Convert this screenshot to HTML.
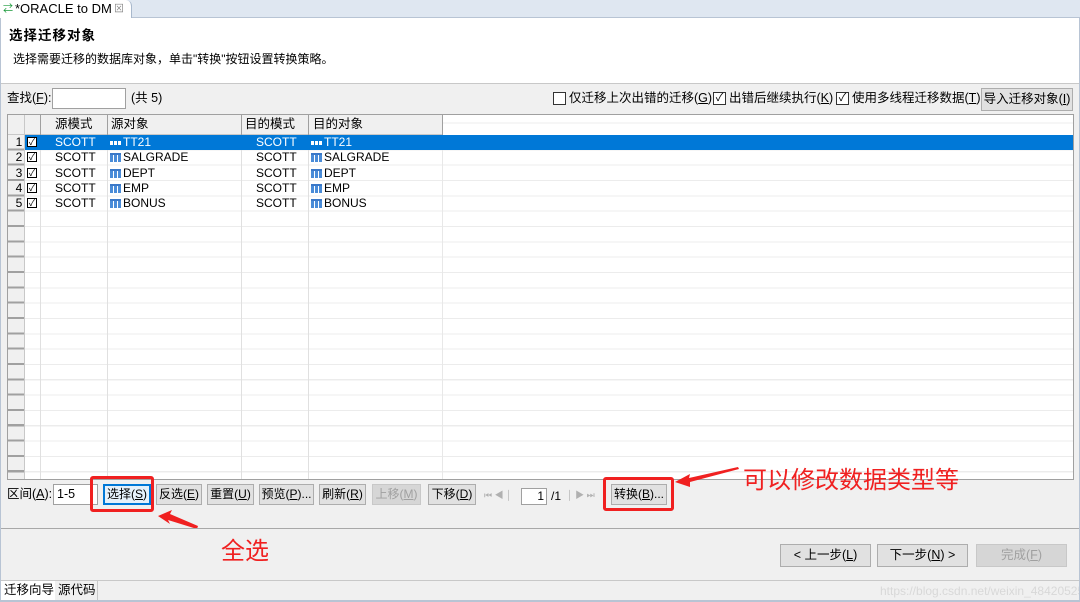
<!DOCTYPE html>
<html><head><meta charset="utf-8"><style>
*{margin:0;padding:0;box-sizing:border-box}
body{width:1080px;height:602px;position:relative;overflow:hidden;background:#f0f0f0;font-family:"Liberation Sans","Noto Sans CJK SC",sans-serif;font-size:12px;color:#000}
.a{position:absolute;white-space:nowrap;line-height:15px}
.btn{position:absolute;height:21px;border:1px solid #adadad;background:#e1e1e1;font-size:12px;line-height:19px;text-align:center}
.dis{color:#a0a0a0;background:#d6d6d6;border-color:#c8c8c8}
.cb{position:absolute;width:13px;height:13px;border:1px solid #333;background:#fff}
.row{position:absolute;left:40px;width:1033px;height:15px;font-size:12px;line-height:15px}
.row span{position:absolute}
.ti{display:inline-block;width:11px;height:9px;background:repeating-linear-gradient(90deg,#4a8cd8 0 3px,#fff 3px 4px);border-top:2px solid #3a78c8;vertical-align:-1px;margin-right:2px}
.sel .ti{background:repeating-linear-gradient(90deg,#fff 0 3px,#0078d7 3px 4px);border-top:2px solid #0078d7;height:6px;vertical-align:1px}
.ck{position:absolute;left:-13px;top:2px;width:10px;height:10px;border:1px solid #000;background:#fff;color:#000;font-size:9px;line-height:8px;text-align:center;font-style:normal}
.red{position:absolute;border:3px solid #f02020;border-radius:3px}
</style></head><body>
<div class="a" style="left:0;top:0;width:1080px;height:18px;background:#dfe7f1;border-bottom:1px solid #b8c4d4"></div>
<div class="a" style="left:0;top:0;width:132px;height:18px;background:#fff;border-right:1px solid #a8b8cc;border-radius:0 6px 0 0"></div>
<div class="a" style="left:3px;top:2px;font-size:10px;color:#1a9a3a">⇄</div>
<div class="a" style="left:15px;top:1px;font-size:13px;color:#000">*ORACLE to DM</div>
<div class="a" style="left:114px;top:2px;font-size:10px;color:#888">⊠</div>
<div class="a" style="left:1px;top:18px;width:1078px;height:66px;background:#fff;border-bottom:1px solid #c8c8c8"></div>
<div class="a" style="left:9px;top:27px;font-size:13.5px;font-weight:bold;letter-spacing:1px;line-height:17px">选择迁移对象</div>
<div class="a" style="left:13px;top:52px;font-size:12px">选择需要迁移的数据库对象，单击"转换"按钮设置转换策略。</div>
<div class="a" style="left:7px;top:91px;font-size:12.5px">查找(<u>F</u>):</div>
<div class="a" style="left:52px;top:88px;width:74px;height:21px;background:#fff;border:1px solid #a0a0a0"></div>
<div class="a" style="left:131px;top:91px;font-size:12.5px">(共 5)</div>
<div class="cb" style="left:553px;top:92px"></div>
<div class="a" style="left:569px;top:91px;font-size:12.5px">仅迁移上次出错的迁移(<u>G</u>)</div>
<div class="cb" style="left:713px;top:92px;font-size:11px;line-height:10px;text-align:center">✓</div>
<div class="a" style="left:729px;top:91px;font-size:12.5px">出错后继续执行(<u>K</u>)</div>
<div class="cb" style="left:836px;top:92px;font-size:11px;line-height:10px;text-align:center">✓</div>
<div class="a" style="left:852px;top:91px;font-size:12.5px">使用多线程迁移数据(<u>T</u>)</div>
<div class="btn" style="left:981px;top:88px;width:92px;height:23px;line-height:21px;font-size:12.5px">导入迁移对象(<u>I</u>)</div>
<div class="a" style="left:7px;top:114px;width:1067px;height:366px;background:#fff;border:1px solid #a0a0a0;
background-image:repeating-linear-gradient(180deg,transparent 0 14.3px,#ececec 14.3px 15.33px);background-position:0 20px;background-repeat:repeat-y"></div>
<div class="a" style="left:8px;top:115px;width:435px;height:20px;background:#f0f0f0;border-bottom:1px solid #c8c8c8"></div>
<div class="a" style="left:8px;top:135px;width:16px;height:344px;background:#f0f0f0;
background-image:repeating-linear-gradient(180deg,#f0f0f0 0 13.3px,#a0a0a0 13.3px 15.33px)"></div>
<div class="a" style="left:24px;top:115px;width:1px;height:364px;background:#c8c8c8"></div>
<div class="a" style="left:40px;top:115px;width:1px;height:364px;background:#e0e0e0"></div>
<div class="a" style="left:107px;top:115px;width:1px;height:364px;background:#e0e0e0"></div>
<div class="a" style="left:241px;top:115px;width:1px;height:364px;background:#e0e0e0"></div>
<div class="a" style="left:308px;top:115px;width:1px;height:364px;background:#e0e0e0"></div>
<div class="a" style="left:442px;top:115px;width:1px;height:364px;background:#e8e8e8"></div>
<div class="a" style="left:40px;top:115px;width:1px;height:20px;background:#a0a0a0"></div>
<div class="a" style="left:107px;top:115px;width:1px;height:20px;background:#a0a0a0"></div>
<div class="a" style="left:241px;top:115px;width:1px;height:20px;background:#a0a0a0"></div>
<div class="a" style="left:308px;top:115px;width:1px;height:20px;background:#a0a0a0"></div>
<div class="a" style="left:442px;top:115px;width:1px;height:20px;background:#a0a0a0"></div>
<div class="a" style="left:55px;top:117px;font-size:12.5px">源模式</div>
<div class="a" style="left:111px;top:117px;font-size:12.5px">源对象</div>
<div class="a" style="left:245px;top:117px;font-size:12.5px">目的模式</div>
<div class="a" style="left:313px;top:117px;font-size:12.5px">目的对象</div>

<div class="a" style="left:25px;top:135px;width:1048px;height:15px;background:#0078d7"></div>
<div class="row sel" style="top:135px;color:#fff"><span style="left:-29px;color:#000;width:16px;text-align:center">1</span><i class="ck">✓</i><span style="left:15px">SCOTT</span><span style="left:70px"><i class="ti"></i>TT21</span><span style="left:216px">SCOTT</span><span style="left:271px"><i class="ti"></i>TT21</span></div>
<div class="row" style="top:150.3px"><span style="left:-29px;width:16px;text-align:center">2</span><i class="ck">✓</i><span style="left:15px">SCOTT</span><span style="left:70px"><i class="ti"></i>SALGRADE</span><span style="left:216px">SCOTT</span><span style="left:271px"><i class="ti"></i>SALGRADE</span></div>
<div class="row" style="top:165.7px"><span style="left:-29px;width:16px;text-align:center">3</span><i class="ck">✓</i><span style="left:15px">SCOTT</span><span style="left:70px"><i class="ti"></i>DEPT</span><span style="left:216px">SCOTT</span><span style="left:271px"><i class="ti"></i>DEPT</span></div>
<div class="row" style="top:181px"><span style="left:-29px;width:16px;text-align:center">4</span><i class="ck">✓</i><span style="left:15px">SCOTT</span><span style="left:70px"><i class="ti"></i>EMP</span><span style="left:216px">SCOTT</span><span style="left:271px"><i class="ti"></i>EMP</span></div>
<div class="row" style="top:196.3px"><span style="left:-29px;width:16px;text-align:center">5</span><i class="ck">✓</i><span style="left:15px">SCOTT</span><span style="left:70px"><i class="ti"></i>BONUS</span><span style="left:216px">SCOTT</span><span style="left:271px"><i class="ti"></i>BONUS</span></div>

<div class="a" style="left:7px;top:487px;font-size:12.5px">区间(<u>A</u>):</div>
<div class="a" style="left:53px;top:484px;width:45px;height:21px;background:#fff;border:1px solid #a0a0a0;padding-left:3px;line-height:19px;font-size:12.5px">1-5</div>
<div class="btn" style="left:103px;top:484px;width:48px;border:2px solid #0078d7;background:#e5f1fb;line-height:17px">选择(<u>S</u>)</div>
<div class="btn" style="left:156px;top:484px;width:46px">反选(<u>E</u>)</div>
<div class="btn" style="left:207px;top:484px;width:47px">重置(<u>U</u>)</div>
<div class="btn" style="left:259px;top:484px;width:55px">预览(<u>P</u>)...</div>
<div class="btn" style="left:319px;top:484px;width:47px">刷新(<u>R</u>)</div>
<div class="btn dis" style="left:372px;top:484px;width:49px">上移(<u>M</u>)</div>
<div class="btn" style="left:428px;top:484px;width:48px">下移(<u>D</u>)</div>
<div class="a" style="left:484px;top:488px;font-size:9px;color:#b0b0b0">⏮ ◀ │</div>
<div class="a" style="left:521px;top:488px;width:26px;height:17px;background:#fff;border:1px solid #a0a0a0;font-size:12px;text-align:right;padding-right:2px">1</div>
<div class="a" style="left:551px;top:489px;font-size:12px">/1</div>
<div class="a" style="left:567px;top:488px;font-size:9px;color:#b0b0b0">│ ▶ ⏭</div>
<div class="btn" style="left:611px;top:484px;width:56px">转换(<u>B</u>)...</div>
<div class="red" style="left:90px;top:476px;width:64px;height:36px"></div>
<div class="red" style="left:603px;top:477px;width:71px;height:34px"></div>
<svg class="a" style="left:0;top:0" width="1080" height="602"><polygon points="158,516 172,510 170,514 198,526 197,529 168,520 170,524" fill="#f02020"/><polygon points="675,482 690,474 689,478 738,467 739,469 690,482 690,487" fill="#f02020"/></svg>
<div class="a" style="left:221px;top:535px;font-size:24px;line-height:28px;color:#f02020;font-family:'Noto Sans CJK SC',sans-serif">全选</div>
<div class="a" style="left:743px;top:464px;font-size:24px;line-height:28px;color:#f02020;font-family:'Noto Sans CJK SC',sans-serif">可以修改数据类型等</div>
<div class="a" style="left:1px;top:528px;width:1078px;height:1px;background:#a8a8a8"></div>
<div class="btn" style="left:780px;top:544px;width:91px;height:23px;line-height:21px;font-size:12.5px">&lt; 上一步(<u>L</u>)</div>
<div class="btn" style="left:877px;top:544px;width:91px;height:23px;line-height:21px;font-size:12.5px">下一步(<u>N</u>) &gt;</div>
<div class="btn dis" style="left:976px;top:544px;width:91px;height:23px;line-height:21px;font-size:12.5px">完成(<u>F</u>)</div>
<div class="a" style="left:1px;top:580px;width:1078px;height:1px;background:#c8c8c8"></div>
<div class="a" style="left:1px;top:581px;width:54px;height:19px;background:#fff;font-size:12.5px;padding-left:3px;line-height:19px">迁移向导</div>
<div class="a" style="left:56px;top:581px;width:42px;height:19px;background:#f0f0f0;border-right:1px solid #c8c8c8;font-size:12.5px;padding-left:2px;line-height:19px">源代码</div>
<div class="a" style="left:880px;top:584px;font-size:12px;color:#d8d8d8">https://blog.csdn.net/weixin_48420525</div>
<div class="a" style="left:0;top:600px;width:1080px;height:2px;background:#b8c4d4"></div>
<div class="a" style="left:0;top:18px;width:1px;height:584px;background:#b8c4d4"></div>
<div class="a" style="left:1079px;top:18px;width:1px;height:584px;background:#b8c4d4"></div>
</body></html>
